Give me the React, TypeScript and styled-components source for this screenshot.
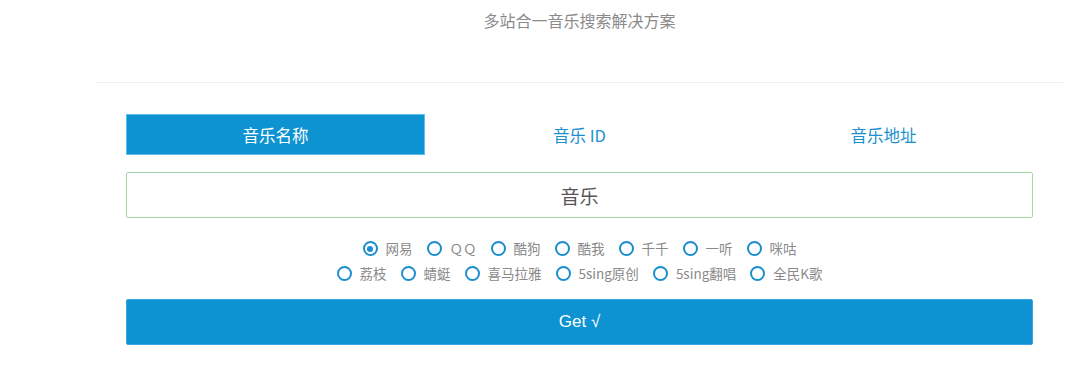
import React, { useState } from "react";
import styled, { createGlobalStyle } from "styled-components";

const Global = createGlobalStyle`
  html, body { margin: 0; padding: 0; background: #fff; }
  body { font-family: "Noto Sans CJK SC", "Noto Sans", sans-serif; }
  * { box-sizing: border-box; }
`;

const Page = styled.div`
  width: 967px;
  margin-left: 96px;
`;

const Header = styled.header`
  height: 83px;
  border-bottom: 1px solid #eeeeee;
  display: flex;
  justify-content: center;
  padding-top: 8px;
`;

const Subtitle = styled.div`
  font-size: 16px;
  line-height: 24px;
  color: #8a8a8a;
  height: 24px;
`;

const Body = styled.main`
  padding: 31px 30px 0 30px;
  display: flex;
  flex-direction: column;
`;

const Tabs = styled.div`
  display: grid;
  grid-template-columns: repeat(3, 1fr);
  gap: 5px;
  height: 41px;
`;

const Tab = styled.button<{ $active: boolean }>`
  border: 1px solid ${(p) => (p.$active ? "#5cc0ee" : "transparent")};
  background: ${(p) => (p.$active ? "#0d93d2" : "#fff")};
  color: ${(p) => (p.$active ? "#fff" : "#1a90d0")};
  font-family: inherit;
  font-size: 16.5px;
  padding: 0;
  cursor: pointer;
  display: flex;
  align-items: center;
  justify-content: center;
`;

const Input = styled.input`
  margin-top: 17px;
  height: 46px;
  border: 1px solid #a6d8a6;
  border-radius: 2px;
  font-family: inherit;
  font-size: 19px;
  color: #555;
  text-align: center;
  outline: none;
  padding: 0;
`;

const Sources = styled.div`
  margin-top: 18px;
  display: flex;
  flex-direction: column;
  align-items: center;
`;

const SourceRow = styled.div`
  display: flex;
  height: 25px;
  align-items: center;
  gap: 14px;
`;

const Option = styled.label`
  display: flex;
  align-items: center;
  gap: 8px;
  font-size: 13.5px;
  color: #8a8a8a;
  cursor: pointer;
  line-height: 1;
`;

const Circle = styled.span<{ $checked: boolean }>`
  width: 15px;
  height: 15px;
  border-radius: 50%;
  border: 2px solid #1a8ecf;
  display: flex;
  align-items: center;
  justify-content: center;
  &::after {
    content: "";
    width: 6px;
    height: 6px;
    border-radius: 50%;
    background: #1a8ecf;
    display: ${(p) => (p.$checked ? "block" : "none")};
  }
`;

const Submit = styled.button`
  margin-top: 13px;
  height: 46px;
  border: 1px solid #3aa8e0;
  border-radius: 2px;
  background: #0d93d2;
  color: #fff;
  font-family: "Liberation Sans", "Noto Sans", sans-serif;
  font-size: 17px;
  cursor: pointer;
`;

const row1 = [
  ["netease", "网易"],
  ["qq", "ＱＱ"],
  ["kugou", "酷狗"],
  ["kuwo", "酷我"],
  ["baidu", "千千"],
  ["1ting", "一听"],
  ["migu", "咪咕"],
];
const row2 = [
  ["lizhi", "荔枝"],
  ["qingting", "蜻蜓"],
  ["ximalaya", "喜马拉雅"],
  ["5singyc", "5sing原创"],
  ["5singfc", "5sing翻唱"],
  ["kg", "全民K歌"],
];

export default function App() {
  const [tab, setTab] = useState(0);
  const [src, setSrc] = useState("netease");
  const tabs = ["音乐名称", "音乐 ID", "音乐地址"];
  const renderRow = (items: string[][]) => (
    <SourceRow>
      {items.map(([k, label]) => (
        <Option key={k} onClick={() => setSrc(k)}>
          <Circle $checked={src === k} />
          {label}
        </Option>
      ))}
    </SourceRow>
  );
  return (
    <>
      <Global />
      <Page>
        <Header>
          <Subtitle>多站合一音乐搜索解决方案</Subtitle>
        </Header>
        <Body>
          <Tabs>
            {tabs.map((t, i) => (
              <Tab key={t} $active={tab === i} onClick={() => setTab(i)}>
                {t}
              </Tab>
            ))}
          </Tabs>
          <Input defaultValue="音乐" />
          <Sources>
            {renderRow(row1)}
            {renderRow(row2)}
          </Sources>
          <Submit>Get √</Submit>
        </Body>
      </Page>
    </>
  );
}
